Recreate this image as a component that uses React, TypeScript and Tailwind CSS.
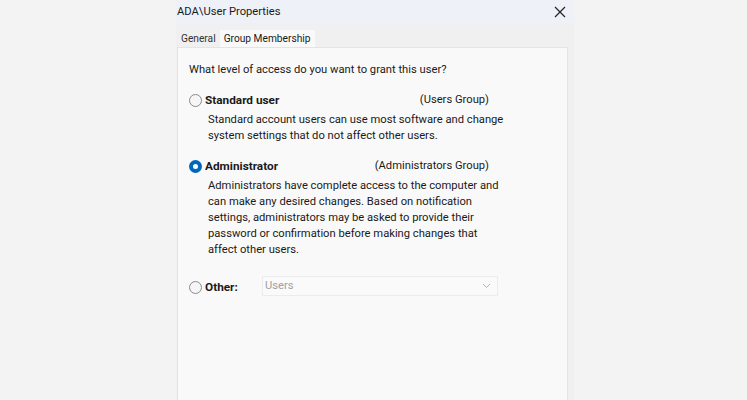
import React from "react";

function Radio({ checked }: { checked?: boolean }) {
  if (checked) {
    return (
      <span className="flex h-[13px] w-[13px] shrink-0 items-center justify-center rounded-full bg-[#0067c0]">
        <span className="h-[5px] w-[5px] rounded-full bg-white" />
      </span>
    );
  }
  return <span className="h-[13px] w-[13px] shrink-0 rounded-full border border-[#8a8a8a] bg-[#f6f6f6]" />;
}

export default function App() {
  return (
    <div
      className="flex h-[400px] w-[747px] overflow-hidden bg-[#f3f3f3] pl-[176px] font-['Roboto'] text-[#1a1a1a]"
      style={{ fontFamily: 'Roboto, "Noto Sans", sans-serif' }}
    >
      <div className="flex w-[398px] flex-col bg-[#f0f0f0]">
        <div className="flex h-[23px] items-center justify-between bg-[#eef1f8] pl-px pr-[8px]">
          <span className="text-[11.2px] leading-none">ADA\User Properties</span>
          <svg width="12" height="12" viewBox="0 0 12 12" className="text-[#222]">
            <path d="M1 1 L11 11 M11 1 L1 11" stroke="currentColor" strokeWidth="1.2" fill="none" />
          </svg>
        </div>
        <div className="flex h-[24px] items-end pl-[5px] text-[10.2px]">
          <div className="flex h-[16px] items-center text-[#333]">General</div>
          <div className="ml-[4px] flex h-[17px] items-center bg-[#f9f9f9] px-[4px]">Group Membership</div>
        </div>
        <div className="ml-px flex w-[391px] flex-1 flex-col border border-b-0 border-[#e4e4e4] bg-[#f9f9f9] pl-[11px] pt-[14px] text-[11.2px] leading-[16px]">
          <div>What level of access do you want to grant this user?</div>

          <div className="mt-[10px] flex h-[24px] w-[300px] items-center justify-between">
            <div className="flex items-center gap-[3px]">
              <Radio />
              <span className="text-[11.8px] font-bold">Standard user</span>
            </div>
            <span>(Users Group)</span>
          </div>
          <div className="w-[316px] pl-[19px]">
            Standard account users can use most software and change system settings that do not affect other users.
          </div>

          <div className="mt-[10px] flex h-[24px] w-[300px] items-center justify-between">
            <div className="flex items-center gap-[3px]">
              <Radio checked />
              <span className="text-[11.8px] font-bold">Administrator</span>
            </div>
            <span>(Administrators Group)</span>
          </div>
          <div className="w-[316px] pl-[19px]">
            Administrators have complete access to the computer and can make any desired changes. Based on notification settings, administrators may be asked to provide their password or confirmation before making changes that affect other users.
          </div>

          <div className="mt-[18px] flex items-center">
            <div className="flex w-[73px] items-center gap-[3px] pt-[2px]">
              <Radio />
              <span className="text-[11.8px] font-bold">Other:</span>
            </div>
            <div className="flex h-[20px] w-[236px] items-center justify-between border border-[#ececec] bg-[#fafafa] pl-[2px] pr-[6px] text-[#a0a0a0]">
              <span>Users</span>
              <svg width="9" height="6" viewBox="0 0 9 6">
                <path d="M1 1 L4.5 4.5 L8 1" stroke="#b0b0b0" strokeWidth="1" fill="none" />
              </svg>
            </div>
          </div>
        </div>
      </div>
    </div>
  );
}
